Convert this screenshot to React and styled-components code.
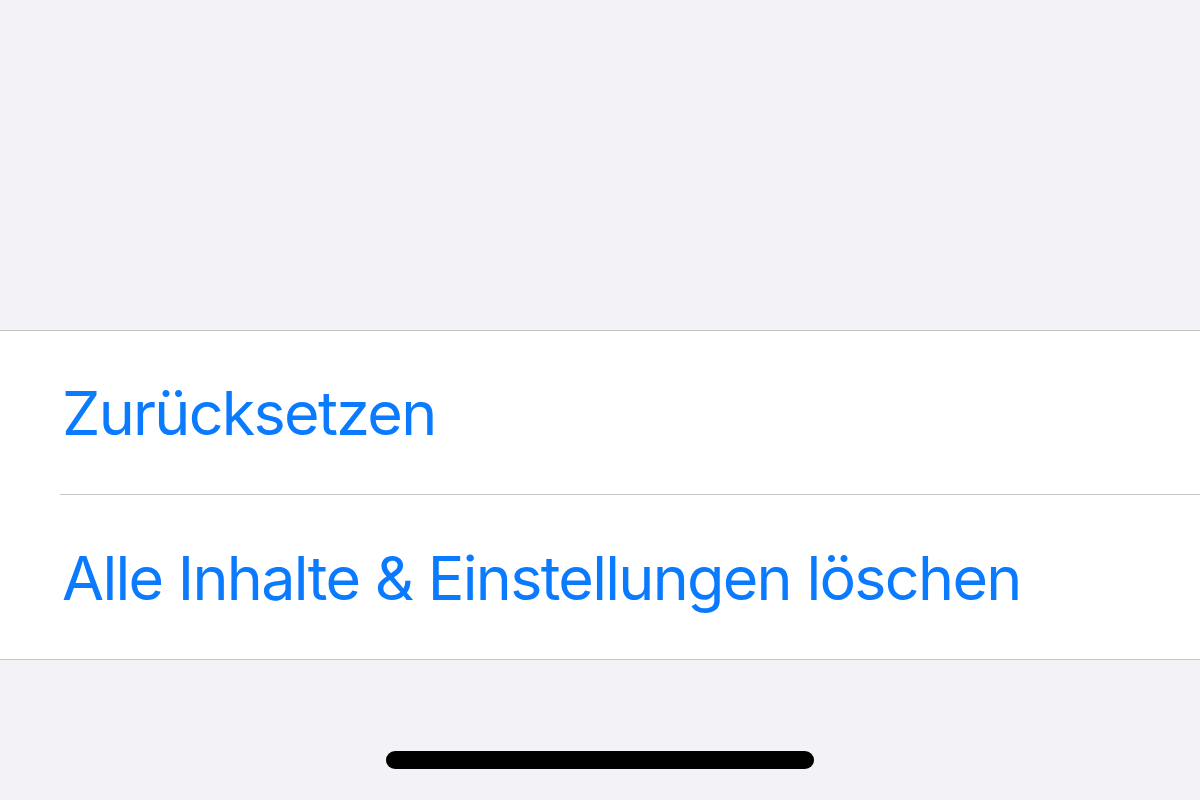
import React from "react";
import styled, { createGlobalStyle } from "styled-components";

const Global = createGlobalStyle`
  html, body { margin: 0; padding: 0; }
  body { background: #f2f2f7; font-family: Inter, "Noto Sans", sans-serif; }
`;

const Screen = styled.div`
  width: 1200px;
  height: 800px;
  background: #f2f2f7;
  display: flex;
  flex-direction: column;
  overflow: hidden;
`;

const TopSpace = styled.div`
  height: 330px;
  flex: none;
`;

const Group = styled.div`
  background: #fff;
  border-top: 1px solid #c6c6c8;
  border-bottom: 1px solid #c6c6c8;
`;

const Row = styled.div`
  height: ${(p) => p.$h}px;
  display: flex;
  padding-left: 60px;
  box-sizing: border-box;
`;

const RowInner = styled.div`
  flex: 1;
  display: flex;
  align-items: center;
  padding-left: 2px;
  padding-top: ${(p) => (p.$separator ? 2 : 2)}px;
  box-sizing: border-box;
  border-top: ${(p) => (p.$separator ? "1px solid #c6c6c8" : "none")};
`;

const Action = styled.span`
  color: #0a7aff;
  font-size: 61px;
  letter-spacing: -1.7px;
  line-height: 1;
`;

const Bottom = styled.div`
  flex: 1;
  display: flex;
  justify-content: center;
  padding-top: 91px;
`;

const HomeIndicator = styled.div`
  width: 428px;
  height: 18px;
  border-radius: 9px;
  background: #000;
`;

export default function App() {
  return (
    <Screen>
      <Global />
      <TopSpace />
      <Group>
        <Row $h={163}>
          <RowInner>
            <Action>Zurücksetzen</Action>
          </RowInner>
        </Row>
        <Row $h={165}>
          <RowInner $separator>
            <Action>Alle Inhalte &amp; Einstellungen löschen</Action>
          </RowInner>
        </Row>
      </Group>
      <Bottom>
        <HomeIndicator />
      </Bottom>
    </Screen>
  );
}
